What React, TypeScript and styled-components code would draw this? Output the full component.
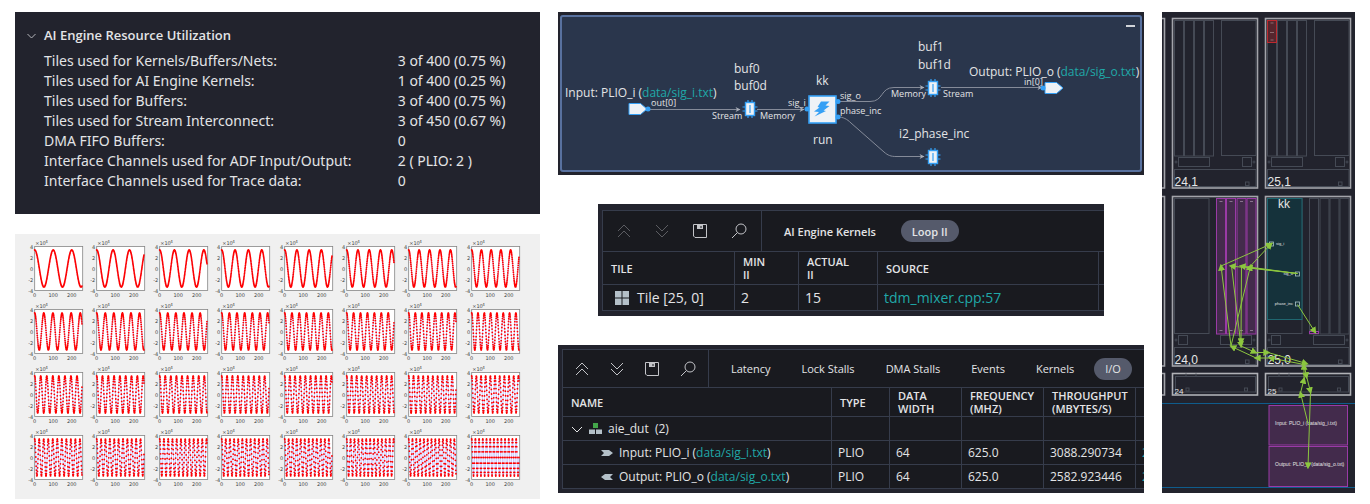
import React from 'react';
import styled, { createGlobalStyle } from 'styled-components';

const color = {
  panel: '#22232d',
  surface: '#191a1f',
  line: '#363c4b',
  text: '#e3e4e6',
  link: '#20a8a8',
  pill: '#555a6b',
  blue: '#35a0f5',
  green: '#8cc63f',
};

const GlobalStyle = createGlobalStyle`
  *, *::before, *::after { box-sizing: border-box; }
  body {
    margin: 0;
    background: #ffffff;
    color: ${color.text};
    font-family: 'Open Sans', 'Noto Sans', sans-serif;
    font-size: 13px;
  }
  button {
    margin: 0;
    padding: 0;
    border: 0;
    background: none;
    color: inherit;
    font: inherit;
    cursor: pointer;
  }
  a { color: ${color.link}; fill: ${color.link}; text-decoration: none; }
  svg { display: block; }
`;

/* ---------- page ---------- */

const Page = styled.main`
  display: grid;
  grid-template-columns: 525fr 586fr 193fr;
  gap: 18px;
  align-items: start;
  padding: 12px 15px 5px;
`;

const Column = styled.div<{ $gap: number }>`
  display: flex;
  flex-direction: column;
  gap: ${(p) => p.$gap}px;
  min-width: 0;
`;

/* ---------- resource utilization ---------- */

const Resources = styled.section`
  padding: 13px 12px 23px;
  background: ${color.panel};
`;

const ResourceTitle = styled.button`
  display: flex;
  align-items: center;
  gap: 8px;
  height: 20px;
  font-size: 13px;
  font-weight: 600;
`;

const ResourceTable = styled.table`
  width: 100%;
  margin-top: 6px;
  border-collapse: collapse;
  font-family: 'Noto Sans', 'Open Sans', sans-serif;
  font-size: 14px;
  line-height: 20px;

  th, td { padding: 0; text-align: left; font-weight: 400; }
  th { width: 74%; padding-left: 17px; }
`;

const resources: [string, string][] = [
  ['Tiles used for Kernels/Buffers/Nets:', '3 of 400 (0.75 %)'],
  ['Tiles used for AI Engine Kernels:', '1 of 400 (0.25 %)'],
  ['Tiles used for Buffers:', '3 of 400 (0.75 %)'],
  ['Tiles used for Stream Interconnect:', '3 of 450 (0.67 %)'],
  ['DMA FIFO Buffers:', '0'],
  ['Interface Channels used for ADF Input/Output:', '2 ( PLIO: 2 )'],
  ['Interface Channels used for Trace data:', '0'],
];

function ResourcePanel() {
  return (
    <Resources>
      <ResourceTitle type="button" aria-expanded="true">
        <svg width="9" height="9" viewBox="0 0 9 9" fill="none" stroke="#b4b6bb">
          <path d="M0.5 3l4 4L8.5 3" />
        </svg>
        AI Engine Resource Utilization
      </ResourceTitle>
      <ResourceTable>
        <tbody>
          {resources.map(([label, value]) => (
            <tr key={label}>
              <th scope="row">{label}</th>
              <td>{value}</td>
            </tr>
          ))}
        </tbody>
      </ResourceTable>
    </Resources>
  );
}

/* ---------- tone plots ---------- */

const PlotPanel = styled.section`
  display: grid;
  grid-template-columns: repeat(8, 1fr);
  padding: 3px 14px 10px 12px;
  background: #f0f0f0;
`;

const PlotSvg = styled.svg`
  width: 100%;
  height: 63px;
  overflow: visible;
  font-family: 'DejaVu Sans', sans-serif;
  font-size: 5px;
  fill: #444444;
`;

const SAMPLES = 256;
const BOX = { x: 7.5, y: 9.5, w: 48, h: 44 };

function tone(index: number) {
  const frequency = 0.01 + (index * 0.04) / 31;
  const points: string[] = [];
  for (let n = 0; n < SAMPLES; n++) {
    const x = BOX.x + (n / 259) * BOX.w;
    const y = BOX.y + BOX.h / 2 - Math.cos(2 * Math.PI * frequency * n) * BOX.h * 0.42;
    points.push(`${x.toFixed(2)} ${y.toFixed(2)}`);
  }
  return points;
}

function Plot({ index }: { index: number }) {
  const points = tone(index);
  return (
    <PlotSvg viewBox="0 0 62 63">
      <rect x={BOX.x} y={BOX.y} width={BOX.w} height={BOX.h} fill="#ffffff" stroke="#858585" strokeWidth="0.8" />
      <path d={`M${points.join('L')}`} fill="none" stroke="#7070ff" strokeWidth="0.4" />
      <path
        d={points.map((p) => `M${p}h0`).join('')}
        fill="none"
        stroke="#ff0000"
        strokeWidth="1.8"
        strokeLinecap="round"
      />
      <text x="8" y="8">×10</text>
      <text x="18" y="6" fontSize="4">4</text>
      {[4, 2, 0, -2, -4].map((v) => (
        <text key={v} x="6" y={BOX.y + BOX.h / 2 - v * 5.5 + 2} textAnchor="end">{v}</text>
      ))}
      {[0, 100, 200].map((v) => (
        <text key={v} x={BOX.x + (v / 259) * BOX.w} y="60" textAnchor="middle">{v}</text>
      ))}
    </PlotSvg>
  );
}

function Plots() {
  return (
    <PlotPanel>
      {Array.from({ length: 32 }, (_, i) => <Plot key={i} index={i} />)}
    </PlotPanel>
  );
}

/* ---------- graph ---------- */

const GraphPanel = styled.section`
  padding: 3px 2px;
  background: ${color.panel};
`;

const GraphFrame = styled.div`
  position: relative;
  outline: 2px solid #58719f;
  outline-offset: -2px;
  border-radius: 3px;
  background: #2a364c;
`;

const Minimize = styled.button`
  position: absolute;
  top: 10px;
  right: 7px;
  width: 9px;
  height: 8px;

  &::before {
    content: '';
    display: block;
    height: 2px;
    margin-bottom: 6px;
    background: #d0d3d8;
  }
`;

const GraphSvg = styled.svg`
  width: 100%;
  height: auto;
  font-size: 12px;
  fill: ${color.text};
`;

const PortLabel = styled.text`
  font-size: 9px;
`;

function Chip({ x, y }: { x: number; y: number }) {
  return (
    <g transform={`translate(${x} ${y})`} stroke={color.blue}>
      <path d="M-2 -9V9M2 -9V9M-7.5 -2H7.5M-7.5 2H7.5" strokeWidth="1.2" />
      <rect x="-4.5" y="-6.5" width="9" height="13" fill="#eef2f6" strokeWidth="1.4" />
      <path d="M0 -4V4" strokeWidth="1.2" />
    </g>
  );
}

function Port({ x, y }: { x: number; y: number }) {
  return (
    <path
      transform={`translate(${x} ${y})`}
      d="M0 -5.5H11.5L18 0L11.5 5.5H0Z"
      fill="#eef2f6"
      stroke={color.blue}
    />
  );
}

function Graph() {
  return (
    <GraphPanel>
      <GraphFrame>
        <GraphSvg viewBox="2 3 582 157">
          <defs>
            <marker id="wire-end" viewBox="0 0 6 6" markerWidth="6" markerHeight="6" refX="5" refY="3" orient="auto" markerUnits="userSpaceOnUse">
              <path d="M0.5 0.5L5.5 3L0.5 5.5L2 3Z" fill="#a9aeb8" />
            </marker>
          </defs>
          <g fill="none" stroke="#858b99">
            <path d="M90 97.5H182" markerEnd="url(#wire-end)" />
            <path d="M199 97.5H246" markerEnd="url(#wire-end)" />
            <path d="M280 89.5H312C326 89.5 322 75.5 336 75.5H366" markerEnd="url(#wire-end)" />
            <path d="M280 105C285 105 289 107 293 111L326 140C330 143.5 333 144.5 338 144.5H366" markerEnd="url(#wire-end)" />
            <path d="M383 75.5H484" markerEnd="url(#wire-end)" />
          </g>
          <Port x={71} y={97} />
          <Port x={487} y={76} />
          <Chip x={192} y={97} />
          <Chip x={375} y={76} />
          <Chip x={375} y={145} />
          <rect x="251" y="84" width="27" height="27" fill="#eef2f6" stroke={color.blue} strokeWidth="1.6" />
          <path d="M263 89.5H271.5L267.5 93.5L271.5 94L265.5 98.5L268 99L256.5 104.5L261 100L256 99.5L261.5 95.5L259.5 95Z" fill={color.blue} />
          <g fill={color.blue}>
            <circle cx="90" cy="97" r="2.5" />
            <circle cx="249" cy="97" r="2.5" />
            <circle cx="280" cy="89.5" r="2.5" />
            <circle cx="280" cy="105" r="2.5" />
            <circle cx="485" cy="76" r="2.5" />
          </g>
          <text x="7" y="85">Input: PLIO_i (<a href="#sig_i">data/sig_i.txt</a>)</text>
          <text x="411" y="64">Output: PLIO_o (<a href="#sig_o">data/sig_o.txt</a>)</text>
          <text x="176" y="61">buf0</text>
          <text x="176" y="78">buf0d</text>
          <text x="258" y="73">kk</text>
          <text x="255" y="132">run</text>
          <text x="360" y="39">buf1</text>
          <text x="360" y="57">buf1d</text>
          <text x="341" y="126">i2_phase_inc</text>
          <PortLabel x="93" y="94">out[0]</PortLabel>
          <PortLabel x="154" y="107">Stream</PortLabel>
          <PortLabel x="202" y="107">Memory</PortLabel>
          <PortLabel x="230" y="94">sig_i</PortLabel>
          <PortLabel x="282" y="87">sig_o</PortLabel>
          <PortLabel x="282" y="102">phase_inc</PortLabel>
          <PortLabel x="333" y="85">Memory</PortLabel>
          <PortLabel x="385" y="85">Stream</PortLabel>
          <PortLabel x="466" y="73">in[0]</PortLabel>
        </GraphSvg>
        <Minimize type="button" aria-label="Minimize" />
      </GraphFrame>
    </GraphPanel>
  );
}

/* ---------- report tables ---------- */

const ReportPanel = styled.section<{ $inset?: boolean }>`
  margin: 0 ${(p) => (p.$inset ? 40 : 0)}px;
  padding: ${(p) => (p.$inset ? '6px 0 5px 4px' : '4px 0 4px 4px')};
  background: ${color.panel};
`;

const Report = styled.div`
  overflow: hidden;
  border: 1px solid ${color.line};
  border-right: 0;
  background: ${color.surface};
`;

const Toolbar = styled.div<{ $height: number }>`
  display: flex;
  height: ${(p) => p.$height}px;
`;

const Tools = styled.div<{ $gap: number; $pad: number }>`
  display: flex;
  align-items: center;
  gap: ${(p) => p.$gap}px;
  padding: 0 ${(p) => p.$pad}px;
  border-right: 1px solid ${color.line};
`;

const Tool = styled.button<{ $dim?: boolean }>`
  color: ${(p) => (p.$dim ? '#5c5d62' : '#c3c4c8')};
`;

const Tabs = styled.div<{ $gap: number; $weight: number }>`
  display: flex;
  align-items: center;
  gap: ${(p) => p.$gap}px;
  padding-left: 11px;
  font-size: 11px;
  font-weight: ${(p) => p.$weight};
`;

const Tab = styled.button<{ $active?: boolean }>`
  height: 22px;
  padding: 0 11px;
  border-radius: 11px;
  background: ${(p) => (p.$active ? color.pill : 'transparent')};
  white-space: nowrap;
`;

const DataTable = styled.table<{ $body: number }>`
  width: 100%;
  border-collapse: separate;
  border-spacing: 0;
  table-layout: fixed;
  font-size: ${(p) => p.$body}px;
  line-height: 18px;

  th, td {
    padding: 0 0 0 6px;
    border-top: 1px solid ${color.line};
    border-right: 1px solid ${color.line};
    overflow: hidden;
    text-align: left;
    white-space: nowrap;
  }
  th {
    padding-left: 8px;
    font-size: 11px;
    font-weight: 600;
    line-height: 13px;
    white-space: pre-line;
  }
  th:last-child, td:last-child { border-right: 0; }
`;

const Row = styled.tr<{ $height: number }>`
  height: ${(p) => p.$height}px;
`;

const NameCell = styled.div<{ $indent: number; $gap: number }>`
  display: flex;
  align-items: center;
  gap: ${(p) => p.$gap}px;
  padding-left: ${(p) => p.$indent}px;
`;

const stroke = { fill: 'none', stroke: 'currentColor' };

function ToolButtons({ dim, gap, pad }: { dim?: boolean; gap: number; pad: number }) {
  return (
    <Tools $gap={gap} $pad={pad}>
      <Tool type="button" $dim={dim} aria-label="Collapse all">
        <svg width="14" height="14" viewBox="0 0 14 14" {...stroke}>
          <path d="M1 7L7 1L13 7M1 13L7 7L13 13" />
        </svg>
      </Tool>
      <Tool type="button" $dim={dim} aria-label="Expand all">
        <svg width="14" height="14" viewBox="0 0 14 14" {...stroke}>
          <path d="M1 1L7 7L13 1M1 7L7 13L13 7" />
        </svg>
      </Tool>
      <Tool type="button" aria-label="Save">
        <svg width="14" height="14" viewBox="0 0 14 14" {...stroke}>
          <path d="M0.5 0.5H13.5V13.5H2L0.5 12Z" />
          <path d="M4 1H10V5H4Z" fill="currentColor" stroke="none" />
          <path d="M8 2V4" stroke="#191a1f" />
        </svg>
      </Tool>
      <Tool type="button" aria-label="Search">
        <svg width="16" height="16" viewBox="0 0 16 16" {...stroke}>
          <circle cx="10" cy="6" r="5" />
          <path d="M6.5 9.5L1 15" />
        </svg>
      </Tool>
    </Tools>
  );
}

function LoopReport() {
  return (
    <ReportPanel $inset>
      <Report>
        <Toolbar $height={40}>
          <ToolButtons dim gap={24} pad={14} />
          <Tabs $gap={14} $weight={600}>
            <Tab type="button">AI Engine Kernels</Tab>
            <Tab type="button" $active>Loop II</Tab>
          </Tabs>
        </Toolbar>
        <DataTable $body={14}>
          <colgroup>
            <col width="132" />
            <col width="64" />
            <col width="79" />
            <col />
            <col width="5" />
          </colgroup>
          <thead>
            <Row $height={33}>
              <th>TILE</th>
              <th>{'MIN\nII'}</th>
              <th>{'ACTUAL\nII'}</th>
              <th>SOURCE</th>
              <td />
            </Row>
          </thead>
          <tbody>
            <Row $height={26}>
              <td>
                <NameCell $indent={6} $gap={8}>
                  <svg width="14" height="14" viewBox="0 0 14 14" fill="#b4c0c8">
                    <path d="M0 0H6.5V6.5H0ZM7.5 0H14V6.5H7.5ZM0 7.5H6.5V14H0ZM7.5 7.5H14V14H7.5Z" />
                  </svg>
                  Tile [25, 0]
                </NameCell>
              </td>
              <td>2</td>
              <td>15</td>
              <td><a href="#tdm_mixer">tdm_mixer.cpp:57</a></td>
              <td />
            </Row>
          </tbody>
        </DataTable>
      </Report>
    </ReportPanel>
  );
}

const ports = [
  { kind: 'Input', name: 'PLIO_i', file: 'data/sig_i.txt', rate: '3088.290734', icon: 'M0 1H8L12 4L8 7H0L3 4Z' },
  { kind: 'Output', name: 'PLIO_o', file: 'data/sig_o.txt', rate: '2582.923446', icon: 'M12 1H4L0 4L4 7H12L9 4Z' },
];

function IoReport() {
  return (
    <ReportPanel>
      <Report>
        <Toolbar $height={37}>
          <ToolButtons gap={21} pad={12} />
          <Tabs $gap={9} $weight={500}>
            {['Latency', 'Lock Stalls', 'DMA Stalls', 'Events', 'Kernels'].map((t) => (
              <Tab key={t} type="button">{t}</Tab>
            ))}
            <Tab type="button" $active>I/O</Tab>
          </Tabs>
        </Toolbar>
        <DataTable $body={12}>
          <colgroup>
            <col />
            <col width="58" />
            <col width="72" />
            <col width="82" />
            <col width="92" />
            <col width="8" />
          </colgroup>
          <thead>
            <Row $height={29}>
              <th>NAME</th>
              <th>TYPE</th>
              <th>{'DATA\nWIDTH'}</th>
              <th>{'FREQUENCY\n(MHZ)'}</th>
              <th>{'THROUGHPUT\n(MBYTES/S)'}</th>
              <td />
            </Row>
          </thead>
          <tbody>
            <Row $height={24}>
              <td>
                <NameCell $indent={2} $gap={6}>
                  <svg width="12" height="12" viewBox="0 0 12 12" {...stroke}>
                    <path d="M1 4L6 9L11 4" />
                  </svg>
                  <svg width="13" height="11" viewBox="0 0 13 11" fill="#b4c0c8">
                    <path d="M4 0H9V5H4Z" fill="#43a64a" />
                    <path d="M0 6.5H6V11H0ZM7 6.5H13V11H7Z" />
                  </svg>
                  aie_dut&nbsp; (2)
                </NameCell>
              </td>
              <td /><td /><td /><td /><td />
            </Row>
            {ports.map((p) => (
              <Row key={p.name} $height={24}>
                <td>
                  <NameCell $indent={32} $gap={6}>
                    <svg width="12" height="8" viewBox="0 0 12 8" fill="#b4c0c8">
                      <path d={p.icon} />
                    </svg>
                    <span>{p.kind}: {p.name} (<a href={`#${p.name}`}>{p.file}</a>)</span>
                  </NameCell>
                </td>
                <td>PLIO</td>
                <td>64</td>
                <td>625.0</td>
                <td>{p.rate}</td>
                <td><a href={`#${p.name}`}>2</a></td>
              </Row>
            ))}
          </tbody>
        </DataTable>
      </Report>
    </ReportPanel>
  );
}

/* ---------- tile array ---------- */

const ArrayPanel = styled.section`
  background: ${color.panel};
`;

const ArraySvg = styled.svg`
  width: 100%;
  height: auto;
  font-family: 'Liberation Sans', sans-serif;
  font-size: 12px;
  fill: #e6e6e6;
`;

const PURPLE = { fill: '#432b4c', stroke: '#9a3aa6' };

function Bars({ xs, y, purple }: { xs: number[]; y: number; purple?: boolean }) {
  return (
    <>
      {xs.map((x) => (
        <g key={x}>
          <rect x={x} y={y} width="9" height="135.5" {...(purple ? PURPLE : {})} />
          {purple && <path d={`M${x + 3} ${y + 3}h3M${x + 3} ${y + 132}h3`} stroke="#b9a4bd" strokeWidth="0.6" />}
        </g>
      ))}
    </>
  );
}

function TileBase({ x, y, label, wideFirst }: { x: number; y: number; label: string; wideFirst?: boolean }) {
  return (
    <g transform={`translate(${x} ${y})`}>
      <rect x="0" y="0" width="85" height="169.5" stroke="#a3a4aa" strokeWidth="1.6" />
      <rect x={wideFirst ? 2 : 49} y="2" width="34.5" height="135" />
      <rect x={wideFirst ? 48 : 6} y="139" width="31" height="9" />
      <rect x={wideFirst ? 6 : 70} y="139" width="9" height="9" />
      <circle cx="3.5" cy="143.5" r="1" />
      <circle cx="81.5" cy="143.5" r="1" />
      <rect x="2" y="151" width="81.5" height="17" />
      <rect x="73" y="163.5" width="3.5" height="3.5" />
      <text x="2" y="167" fill="#e6e6e6" stroke="none">{label}</text>
    </g>
  );
}

function ShimTile({ x, label }: { x: number; label: string }) {
  return (
    <g transform={`translate(${x} 361.5)`}>
      <rect x="0" y="0" width="85" height="21.5" stroke="#b0b1b6" strokeWidth="1.6" />
      <rect x="3" y="3" width="80" height="15.5" />
      <path d="M13.5 0V3M23.5 0V3" />
      <rect x="13.5" y="14.5" width="3" height="3" />
      <rect x="72" y="14.5" width="3" height="3" />
      <text x="2" y="20" fontSize="8" fill="#e6e6e6" stroke="none">{label}</text>
    </g>
  );
}

const nets = [
  'M69 334L59 254', 'M59 254L109 232', 'M69 334L88.5 254', 'M88.5 254L109 232',
  'M135.5 261.5L69 254', 'M135.5 261.5L79 254', 'M135.5 261.5L86 255.5',
  'M69.5 254L79 334', 'M79.5 254L79 331',
  'M79 334L93.5 340.5', 'M93.5 340.5L106 340.5', 'M106 340.5L144.5 351.5',
  'M145 353L108 346', 'M108 346L94 346', 'M94 346L69.5 334.5',
  'M135.5 292.5L153 320',
  'M142 351.5L144.5 365', 'M144.5 364L148.5 380', 'M148.5 380L146 455',
  'M146 411.5L138.5 381', 'M138.5 381L142 367', 'M142 367L142 353',
];

function TileArray() {
  return (
    <ArrayPanel>
      <ArraySvg viewBox="0 0 193 481">
        <defs>
          <marker id="net-end" viewBox="0 0 6 6" markerWidth="7" markerHeight="7" refX="4" refY="3" orient="auto" markerUnits="userSpaceOnUse">
            <path d="M0 0L6 3L0 6Z" fill={color.green} />
          </marker>
        </defs>
        <g fill="none" stroke="#454a55">
          <path d="M0 6.5H2.5V176H0M0 184.5H2.5V354H0M0 361.5H2.5V383H0" stroke="#a3a4aa" strokeWidth="1.6" />
          <TileBase x={10.5} y={6.5} label="24,1" />
          <TileBase x={103.5} y={6.5} label="25,1" />
          <Bars xs={[12.5, 22.5, 32.5, 42.5]} y={8.5} />
          <Bars xs={[105.5, 115.5, 125.5, 135.5]} y={8.5} />
          <rect x="105.5" y="8.5" width="9" height="22" fill="#56262e" stroke="#bd2a30" />
          <path d="M108.5 11h3M108 20.5h4M108.5 28h3" stroke="#b59a9d" strokeWidth="0.6" />

          <TileBase x={10.5} y={184.5} label="24,0" wideFirst />
          <TileBase x={103.5} y={184.5} label="25,0" wideFirst />
          <Bars xs={[54.5, 64.5, 75, 85]} y={186.5} purple />
          <Bars xs={[147.5, 158, 168, 178]} y={186.5} />
          <rect x="105.5" y="186.5" width="34.5" height="121" fill="#15323b" stroke="#1f6770" />
          <rect x="147.5" y="319.5" width="9" height="2" stroke="#9a3aa6" />

          <ShimTile x={10.5} label="24" />
          <ShimTile x={103.5} label="25" />
          <path d="M0 391.5H193M0 475.5H193" stroke="#0f5c8c" />
          <rect x="107" y="393.5" width="78.5" height="39.5" {...PURPLE} />
          <rect x="107" y="434.5" width="78.5" height="40" {...PURPLE} />
          <g stroke="#a9c3c8" strokeWidth="0.8">
            <rect x="107.5" y="230" width="4" height="4" />
            <rect x="133.5" y="260" width="4" height="4" />
            <rect x="133.5" y="290" width="4" height="4" />
          </g>
        </g>
        <text x="122" y="196" textAnchor="middle">kk</text>
        <g fontSize="4">
          <text x="114" y="233">sig_i</text>
          <text x="131" y="263" textAnchor="end">sig_o</text>
          <text x="131" y="293" textAnchor="end">phase_inc</text>
        </g>
        <g fontSize="5">
          <text x="113" y="413">Input: PLIO_i (data/sig_i.txt)</text>
          <text x="113" y="454">Output: PLIO_o (data/sig_o.txt)</text>
        </g>
        <g fill="none" stroke={color.green}>
          {nets.map((d) => <path key={d} d={d} markerEnd="url(#net-end)" />)}
        </g>
      </ArraySvg>
    </ArrayPanel>
  );
}

export default function App() {
  return (
    <>
      <GlobalStyle />
      <Page>
        <Column $gap={20}>
          <ResourcePanel />
          <Plots />
        </Column>
        <Column $gap={29}>
          <Graph />
          <LoopReport />
          <IoReport />
        </Column>
        <TileArray />
      </Page>
    </>
  );
}
